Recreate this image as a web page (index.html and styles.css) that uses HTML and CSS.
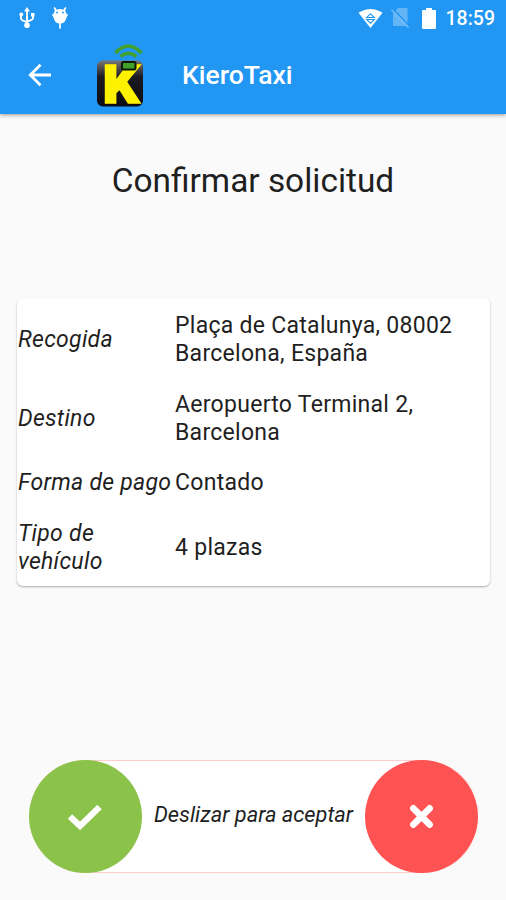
FILE: index.html
```html
<!DOCTYPE html>
<html lang="es">
	<head>
		<meta charset="UTF-8">
		<title>KieroTaxi</title>
		<link rel="stylesheet" href="styles.css">
	</head>
	<body>
		<div id="wrap">
			<header>
				<div class="status">
					<svg class="usb" width="16" height="24" viewBox="0 0 16 24">
						<path d="M8 4v14M2 9v3.500q0 2 6 3.500M14 9v3q0 2-6 3.500" fill="none" stroke="#fff" stroke-width="1.900"/>
						<path d="M8 1l3 4.500H5zM12 7h3.500v3.500H12z" fill="#fff"/>
						<circle cx="2.300" cy="8.500" r="1.900" fill="#fff"/>
						<circle cx="8" cy="19.300" r="2.800" fill="#fff"/>
					</svg>
					<svg class="droid" width="18" height="24" viewBox="0 0 18 24">
						<path d="M3.500 2l2 3M14.500 2l-2 3M9 16v6" stroke="#fff" stroke-width="1.700" stroke-linecap="round"/>
						<path d="M3.500 4.500q5.500-3 11 0l.5 3q2-.5 1.800 1.500l-1.500 3q-1 5.500-6.300 5.500t-6.300-5.500l-1.500-3q-.2-2 1.800-1.500z" fill="#fff"/>
						<circle cx="6" cy="6.500" r=".9" fill="#2196f3"/>
						<circle cx="12" cy="6.500" r=".9" fill="#2196f3"/>
					</svg>
					<svg class="wifi" width="25" height="21" viewBox="0 0 26 21">
						<path d="M.5 4.500Q13-3.500 25.500 4.500L13 20.500z" fill="#fff"/>
						<path d="M9 9.500l4-4 4 4zM9 11.500h8l-4 4z" fill="none" stroke="#2196f3" stroke-width="1.200"/>
					</svg>
					<svg class="sim" width="20" height="22" viewBox="0 0 20 22">
						<path d="M7 1h9.500v18H2V6z" fill="#64b5f6"/>
						<path d="M2 2l17 17.500" stroke="#2196f3" stroke-width="1.500"/>
						<path d="M.5 3l17 17.500" stroke="#73bcf7" stroke-width="1.500"/>
					</svg>
					<svg class="battery" width="14" height="21" viewBox="0 0 14 21">
						<path d="M4 0h6v2h3q1 0 1 1v17q0 1-1 1H1q-1 0-1-1V3q0-1 1-1h3z" fill="#fff"/>
					</svg>
					<span class="clock">18:59</span>
				</div>
				<div class="bar">
					<svg class="back" width="24" height="24" viewBox="0 0 24 24">
						<path d="M23 12H3M12.500 1.800L2.300 12l10.200 10.200" fill="none" stroke="#fff" stroke-width="2.800"/>
					</svg>
					<svg class="logo" width="48" height="66" viewBox="0 0 48 66">
						<defs>
							<linearGradient id="shine" x1="0" y1="0" x2="0" y2="1">
								<stop offset="0" stop-color="#777"/>
								<stop offset=".35" stop-color="#1b1b22"/>
								<stop offset="1" stop-color="#0c0b12"/>
							</linearGradient>
						</defs>
						<path d="M19.500 11q12.500-14 26 0" fill="none" stroke="#43a02a" stroke-width="3.600"/>
						<path d="M24.500 14.500q8-6.500 16 0" fill="none" stroke="#43a02a" stroke-width="3.600"/>
						<rect x="1" y="18.500" width="46" height="46" rx="6" fill="url(#shine)"/>
						<text x="6.500" y="61" class="k" textLength="37" lengthAdjust="spacingAndGlyphs">K</text>
						<rect x="26" y="20" width="13.500" height="7.500" rx="1.500" fill="#43a02a" stroke="#0b1a08" stroke-width="2"/>
					</svg>
					<span class="name">KieroTaxi</span>
				</div>
			</header>

			<h1>Confirmar solicitud</h1>

			<table class="card">
				<tr>
					<th>Recogida</th>
					<td>Plaça de Catalunya, 08002<br>Barcelona, España</td>
				</tr>
				<tr>
					<th>Destino</th>
					<td>Aeropuerto Terminal 2,<br>Barcelona</td>
				</tr>
				<tr>
					<th>Forma de pago</th>
					<td>Contado</td>
				</tr>
				<tr>
					<th>Tipo de<br>vehículo</th>
					<td>4 plazas</td>
				</tr>
			</table>

			<div class="slider">
				<a href="javascript:;" class="ok">
					<svg width="36" height="27" viewBox="0 0 36 27">
						<path d="M3 13.500l10 9.500L32.500 4" fill="none" stroke="#fff" stroke-width="6.200"/>
					</svg>
				</a>
				<span>Deslizar para aceptar</span>
				<a href="javascript:;" class="no">
					<svg width="25" height="25" viewBox="0 0 26 26">
						<path d="M4.500 4.500l17 17M21.500 4.500l-17 17" stroke="#fff" stroke-width="6.800" stroke-linecap="round"/>
					</svg>
				</a>
			</div>
		</div>
	</body>
</html>
```
FILE: styles.css
```css
body{
	margin: 0;
	background-color: #fafafa;
	font-family: Roboto, "Liberation Sans", sans-serif;
	color: #1f1f1f;
}
a{
	text-decoration: none;
}
svg{
	display: block;
	flex: none;
	overflow: visible;
}
#wrap{
	height: 900px;
	overflow: hidden;
}
header{
	height: 114px;
	background-color: #2196f3;
	box-shadow: 0 1px 4px rgba(0,0,0,.4);
	color: white;
}
.status{
	display: flex;
	align-items: center;
	height: 36px;
	padding: 0 11px 0 19px;
}
.droid{
	margin-left: 16px;
}
.wifi{
	margin-left: auto;
}
.sim{
	margin-left: 8px;
}
.battery{
	margin-left: 11px;
}
.clock{
	margin: 2px 0 0 10px;
	font-size: 19.5px;
	font-weight: 500;
	line-height: 34px;
	white-space: nowrap;
}
.bar{
	display: flex;
	align-items: center;
	height: 78px;
	padding-left: 28px;
}
.logo{
	margin-left: 44px;
}
.k{
	font-size: 53px;
	font-weight: 900;
	fill: #fff200;
	stroke: #fff200;
	stroke-width: 1.5px;
}
.name{
	margin: 0 0 2px 38px;
	font-size: 26.5px;
	font-weight: 500;
}
h1{
	margin: 46px 0 0;
	height: 42px;
	line-height: 42px;
	font-size: 33.4px;
	font-weight: 400;
	text-align: center;
}
.card{
	width: 473px;
	margin: 96px 0 0 17px;
	padding-top: 3px;
	border-spacing: 0;
	background-color: white;
	border-radius: 6px;
	box-shadow: 0 1px 2px rgba(0,0,0,.32);
	table-layout: fixed;
	font-size: 23px;
	line-height: 28px;
	letter-spacing: .28px;
}
.card th,.card td{
	padding: 11.25px 0;
	text-align: left;
	font-weight: 400;
	white-space: nowrap;
}
.card th{
	width: 157px;
	padding-left: 1px;
	font-style: italic;
}
.card tr:last-child th,.card tr:last-child td{
	padding-bottom: 10px;
}
.slider{
	display: flex;
	align-items: center;
	justify-content: space-between;
	width: 450px;
	height: 111px;
	margin: 174px 0 0 28.5px;
	background-color: white;
	border-top: 1px solid #ffcdcd;
	border-bottom: 1px solid #ffcdcd;
	border-radius: 57px;
	font-size: 21.8px;
	font-style: italic;
	line-height: 24px;
	white-space: nowrap;
}
.slider span{
	margin-bottom: 2px;
}
.slider a{
	display: flex;
	align-items: center;
	justify-content: center;
	width: 113px;
	height: 113px;
	border-radius: 50%;
}
.slider .ok{
	background-color: #8bc34a;
}
.slider .no{
	background-color: #ff5252;
}
```
